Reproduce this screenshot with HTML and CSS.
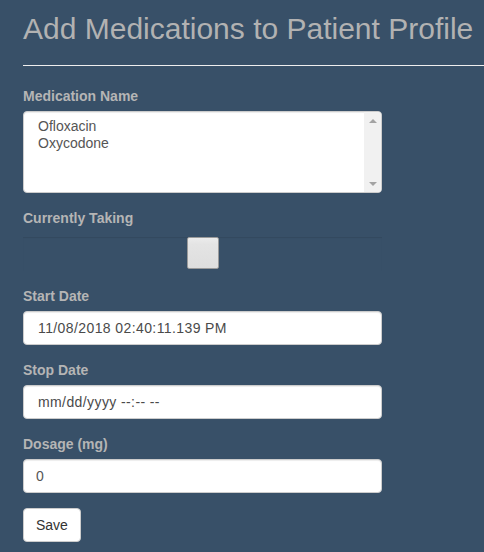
FILE: index.html
```html
<!DOCTYPE html>
<html lang="en">
<head>
<meta charset="utf-8">
<title>Add Medications</title>
<link rel="stylesheet" href="styles.css">
</head>
<body>
<div class="page">
  <h2 class="title">Add Medications to Patient Profile</h2>
  <hr class="rule">
  <form class="form">
    <div class="group">
      <label class="label">Medication Name</label>
      <div class="listbox">
        <ul class="options">
          <li class="option">Ofloxacin</li>
          <li class="option">Oxycodone</li>
        </ul>
        <div class="scrollbar">
          <span class="arrow arrow-up"></span>
          <span class="arrow arrow-down"></span>
        </div>
      </div>
    </div>
    <div class="group">
      <label class="label">Currently Taking</label>
      <div class="check-row"><input type="checkbox" class="check"></div>
    </div>
    <div class="group">
      <label class="label">Start Date</label>
      <input type="text" class="control control-date" value="11/08/2018 02:40:11.139 PM">
    </div>
    <div class="group">
      <label class="label">Stop Date</label>
      <input type="text" class="control control-date" value="mm/dd/yyyy --:-- --">
    </div>
    <div class="group">
      <label class="label">Dosage (mg)</label>
      <input type="text" class="control" value="0">
    </div>
    <button type="button" class="btn">Save</button>
  </form>
</div>
</body>
</html>
```

FILE: styles.css
```css
html, body {
  margin: 0;
  padding: 0;
  background: #385068;
  font-family: "Liberation Sans", Arial, sans-serif;
  font-size: 14px;
  line-height: 1.42857;
  color: #333;
}

.page {
  padding-left: 23px;
  overflow: hidden;
}

.title {
  margin: 12px 0 10px;
  font-size: 30px;
  font-weight: normal;
  line-height: 33px;
  color: #b2b2b2;
  white-space: nowrap;
}

.rule {
  margin: 20px 0;
  border: 0;
  border-top: 1px solid #eeeeee;
  height: 0;
}

.form {
  width: 359px;
}

.group {
  margin-bottom: 15px;
}

.label {
  display: block;
  padding-top: 1px;
  margin-bottom: 4px;
  font-weight: bold;
  color: #b5b5b5;
}

.listbox {
  box-sizing: border-box;
  height: 82px;
  display: flex;
  background: #fff;
  border: 1px solid #ccc;
  border-radius: 4px;
  box-shadow: inset 0 1px 1px rgba(0, 0, 0, .075);
  overflow: hidden;
}

.options {
  flex: 1;
  margin: 0;
  padding: 6px 12px;
  list-style: none;
  color: #555;
}

.option {
  padding: 0 2px 1px;
  line-height: 16px;
}

.scrollbar {
  width: 17px;
  background: #f1f1f1;
  display: flex;
  flex-direction: column;
  justify-content: space-between;
  align-items: center;
  padding: 7px 0 6px;
}

.arrow {
  width: 0;
  height: 0;
  border-left: 4px solid transparent;
  border-right: 4px solid transparent;
}

.arrow-up {
  border-bottom: 4px solid #a3a3a3;
}

.arrow-down {
  border-top: 4px solid #a3a3a3;
}

.check-row {
  display: flex;
  justify-content: center;
  align-items: flex-start;
  height: 34px;
  margin-top: 8px;
  box-shadow: inset 0 1px 1px rgba(0, 0, 0, .09);
}

.check {
  appearance: none;
  -webkit-appearance: none;
  box-sizing: border-box;
  width: 32px;
  height: 32px;
  margin: 0;
  border: 1px solid #9a9a9a;
  border-radius: 2px;
  background: linear-gradient(#ececec 0%, #e4e4e4 20%, #dedede 100%);
}

.control {
  display: block;
  box-sizing: border-box;
  width: 100%;
  height: 34px;
  margin: 0;
  padding: 6px 12px;
  font-family: inherit;
  font-size: 14px;
  color: #555;
  background: #fff;
  border: 1px solid #ccc;
  border-radius: 4px;
  box-shadow: inset 0 1px 1px rgba(0, 0, 0, .075);
  outline: none;
}

.control-date {
  padding-left: 14px;
  letter-spacing: 0.4px;
  color: #4a4a4a;
}

.btn {
  box-sizing: border-box;
  height: 34px;
  padding: 6px 12px;
  font-family: inherit;
  font-size: 14px;
  line-height: 20px;
  color: #333;
  background: #fff;
  border: 1px solid #ccc;
  border-radius: 4px;
}
```
